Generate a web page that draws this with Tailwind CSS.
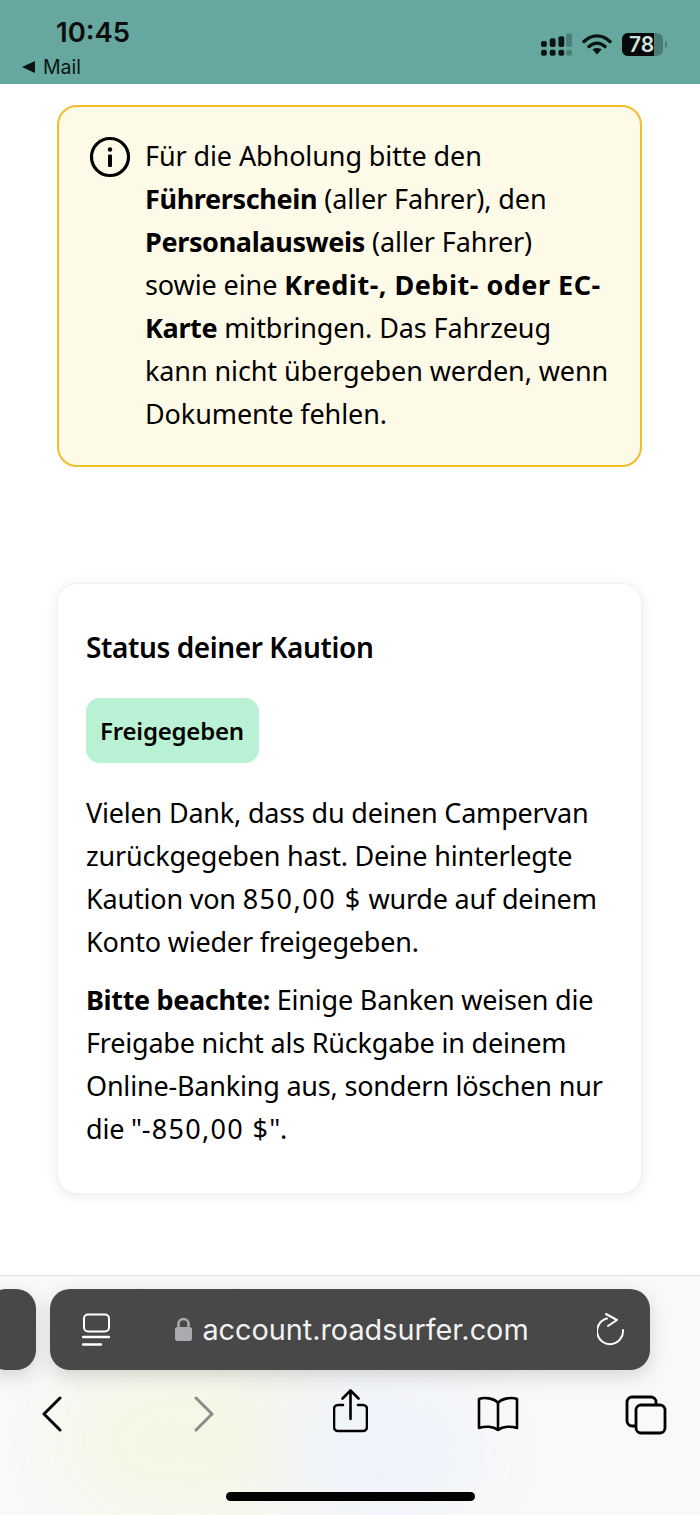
<!DOCTYPE html>
<html lang="de">
<head>
    <meta charset="UTF-8">
    <meta name="viewport" content="width=device-width, initial-scale=1.0">
    <title>Status deiner Kaution</title>
    <script src="https://cdn.jsdelivr.net/npm/@tailwindcss/browser@4"></script>
</head>
<body class="w-[700px] h-[1515px] overflow-hidden bg-white text-black font-['Noto_Sans',sans-serif] flex flex-col">
    <!-- status bar -->
    <header class="h-[84px] shrink-0 bg-[#66a7a0] flex justify-between pl-[22px] pr-[33px] font-['Inter',sans-serif]">
        <div>
            <div class="pl-[34px] pt-[15px] text-[27.5px] leading-[34px] font-semibold text-[#0a0f0e]">10:45</div>
            <div class="flex items-center gap-[8px] mt-[6px] text-[19.5px] leading-[24px] text-[#0a1513]">
                <svg width="13" height="12" viewBox="0 0 13 12"><path d="M13 0v12L0 6z" fill="#0a1513"/></svg>
                <span>Mail</span>
            </div>
        </div>
        <div class="flex items-start gap-[10px] pt-[33px]">
            <svg width="31" height="23" viewBox="0 0 32 23">
                <g fill="#0a1513">
                    <rect x="0" y="8" width="6" height="6" rx="2"/><rect x="9" y="5" width="6" height="9" rx="2"/><rect x="18" y="3" width="6" height="11" rx="2"/>
                    <rect x="0" y="17" width="6" height="6" rx="2"/><rect x="9" y="17" width="6" height="6" rx="2"/><rect x="18" y="17" width="6" height="6" rx="2"/>
                </g>
                <g fill="#0a1513" fill-opacity=".28"><rect x="26" y="0" width="6" height="14" rx="2"/><rect x="26" y="17" width="6" height="6" rx="2"/></g>
            </svg>
            <svg width="30" height="22" viewBox="0 0 30 22">
                <path d="M2 8.500C10 1 20 1 28 8.500M7 13.500C12 9 18 9 23 13.500" fill="none" stroke="#0a1513" stroke-width="3.400" stroke-linecap="round"/>
                <path d="M10.500 16.500C13 14.500 17 14.500 19.500 16.500L15 21.500z" fill="#0a1513"/>
            </svg>
            <div class="flex items-center">
                <div class="relative w-[41px] h-[23px] rounded-[6px] bg-[#0a1513]/30 overflow-hidden">
                    <div class="absolute left-0 top-0 h-full w-[32px] bg-[#050807]"></div>
                    <div class="absolute inset-0 pl-[7px] text-[21px] leading-[23px] font-semibold text-[#cfe3df]">78</div>
                </div>
                <div class="ml-[2px] w-[2px] h-[7px] rounded-r-full bg-[#0a1513]/30"></div>
            </div>
        </div>
    </header>

    <main class="flex-1 pl-[57px] pr-[58px] pt-[21px]">
        <!-- info box -->
        <section class="h-[362px] rounded-[20px] border-2 border-[#f0bd2c] bg-[#fefae8] pl-[30px] pr-[20px] pt-[30px] flex gap-[14px]">
            <svg width="42" height="42" viewBox="0 0 42 42" class="shrink-0 -mt-[1px]">
                <circle cx="21" cy="21" r="18.500" fill="none" stroke="#000" stroke-width="3.200"/>
                <circle cx="21" cy="13.500" r="2.200" fill="#000"/>
                <rect x="19" y="18.500" width="4" height="12.500" rx="1" fill="#000"/>
            </svg>
            <p class="text-[27px] leading-[43px] -mt-[3px] tracking-[-0.1px] whitespace-nowrap">
                Für die Abholung bitte den<br>
                <b class="font-bold tracking-[-0.35px]">Führerschein</b> (aller Fahrer), den<br>
                <b class="font-bold tracking-[-0.35px]">Personalausweis</b> (aller Fahrer)<br>
                sowie eine <b class="font-bold tracking-[0.5px]">Kredit-, Debit- oder EC-<br><span class="tracking-[-0.35px]">Karte</span></b> mitbringen. Das Fahrzeug<br>
                kann nicht übergeben werden, wenn<br>
                Dokumente fehlen.
            </p>
        </section>

        <!-- deposit card -->
        <section class="mt-[116px] h-[611px] rounded-[20px] bg-white border border-[#f0f0f0] shadow-[0_2px_14px_rgba(0,0,0,0.08)] px-[28px] pt-[43px]">
            <h2 class="text-[28px] leading-[40px] font-semibold tracking-[-0.4px]">Status deiner Kaution</h2>
            <div class="mt-[31px] inline-flex items-center h-[65px] rounded-[14px] bg-[#b8f1d3] pl-[14px] pr-[15px] text-[24px] font-semibold tracking-[-0.2px]">Freigegeben</div>
            <p class="mt-[28px] text-[27px] leading-[43px] tracking-[-0.2px] whitespace-nowrap">
                Vielen Dank, dass du deinen Campervan<br>
                zurückgegeben hast. Deine hinterlegte<br>
                Kaution von <span class="tracking-[1.5px]">850,00 $</span> wurde auf deinem<br>
                Konto wieder freigegeben.
            </p>
            <p class="mt-[15px] text-[27px] leading-[43px] tracking-[-0.2px] whitespace-nowrap">
                <b class="font-bold tracking-[-0.35px]">Bitte beachte:</b> Einige Banken weisen die<br>
                Freigabe nicht als Rückgabe in deinem<br>
                Online-Banking aus, sondern löschen nur<br>
                die "<span class="tracking-[1.3px]">-850,00 $</span>".
            </p>
        </section>
    </main>

    <!-- safari toolbar -->
    <footer class="relative h-[240px] shrink-0 border-t border-[#e2e2e2] bg-[#f8f9f9] overflow-hidden">
        <div class="absolute left-[60px] top-[90px] w-[260px] h-[150px] rounded-full bg-[#f6f6e4] blur-2xl"></div>
        <div class="absolute left-[280px] top-[110px] w-[200px] h-[130px] rounded-full bg-[#eef2fa] blur-2xl"></div>
        <div class="relative flex gap-[14px] mt-[13px] -ml-[14px]">
            <div class="w-[50px] h-[81px] rounded-[20px] bg-[#484848] shadow-[0_6px_20px_rgba(0,0,0,0.15)]"></div>
            <div class="w-[600px] h-[81px] rounded-[20px] bg-[#484848] shadow-[0_6px_20px_rgba(0,0,0,0.15)] flex items-center justify-between pl-[32px] pr-[25px]">
                <svg width="28" height="33" viewBox="0 0 28 33" fill="none" stroke="#fff" stroke-width="2" stroke-linecap="round">
                    <rect x="2" y="1.500" width="25" height="17" rx="4"/>
                    <path d="M1 24h26M1 31.500h18" stroke-width="2.400"/>
                </svg>
                <div class="flex items-center gap-[10px] font-['Inter',sans-serif] text-[28.8px] leading-[40px] text-[#f2f2f2] -ml-[3px]">
                    <svg width="17" height="25" viewBox="0 0 17 25"><path d="M3.500 11V7a5 5 0 0 1 10 0v4" fill="none" stroke="#aaaab0" stroke-width="2.500"/><rect x="0" y="10" width="17" height="14" rx="2.500" fill="#aaaab0"/></svg>
                    <span>account.roadsurfer.com</span>
                </div>
                <svg width="28" height="33" viewBox="0 0 28 33" fill="none" stroke="#fff" stroke-width="2" stroke-linecap="round" stroke-linejoin="round">
                    <path d="M10 5.500A13 13 0 1 0 26 17"/>
                    <path d="M9 1l11 6-9 6"/>
                </svg>
            </div>
        </div>
        <nav class="absolute left-0 top-[118px] w-full h-[50px]">
            <svg class="absolute left-[42px] top-[2px]" width="20" height="36" viewBox="0 0 20 36" fill="none" stroke="#000" stroke-width="3" stroke-linecap="round" stroke-linejoin="round"><path d="M18 2L2 18l16 16"/></svg>
            <svg class="absolute left-[194px] top-[2px]" width="20" height="36" viewBox="0 0 20 36" fill="none" stroke="#8a8a8a" stroke-width="3" stroke-linecap="round" stroke-linejoin="round"><path d="M2 2l16 16L2 34"/></svg>
            <svg class="absolute left-[333px] -top-[5px]" width="35" height="44" viewBox="0 0 35 44" fill="none" stroke="#000" stroke-width="2.600" stroke-linecap="round" stroke-linejoin="round"><path d="M10 16H5a4 4 0 0 0-4 4v18a4 4 0 0 0 4 4h25a4 4 0 0 0 4-4V20a4 4 0 0 0-4-4h-5M17.500 30V2M9.500 9.500l8-8 8 8"/></svg>
            <svg class="absolute left-[476px] top-[2px]" width="44" height="36" viewBox="0 0 44 36" fill="none" stroke="#000" stroke-width="2.600" stroke-linecap="round" stroke-linejoin="round"><path d="M22 7C18 2 8 1 3 3v29c6-2 14-2 19 2 5-4 13-4 19-2V3c-5-2-15-1-19 4zM22 7v27"/></svg>
            <svg class="absolute left-[625px] top-[1px]" width="42" height="40" viewBox="0 0 42 40" fill="none" stroke="#000" stroke-width="2.800" stroke-linejoin="round"><path d="M10 31H7a5 5 0 0 1-5-5V7a5 5 0 0 1 5-5h19a5 5 0 0 1 5 5v3"/><rect x="11" y="10" width="29" height="28" rx="5"/></svg>
        </nav>
        <div class="absolute left-[226px] top-[216px] w-[249px] h-[9px] rounded-full bg-black"></div>
    </footer>
</body>
</html>
